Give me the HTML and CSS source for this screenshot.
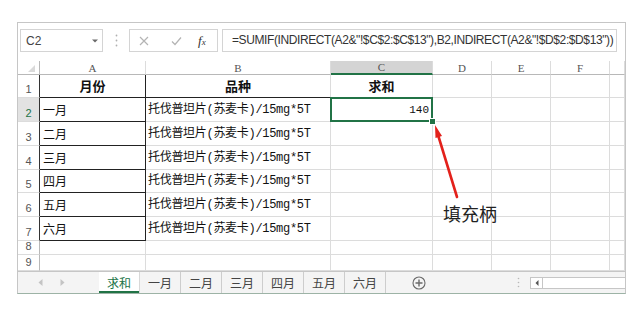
FILE: index.html
```html
<!DOCTYPE html>
<html lang="zh">
<head>
<meta charset="utf-8">
<link rel="stylesheet" href="styles.css">
</head>
<body>
<div class="window">
  <div class="fbar">
    <div class="namebox"><span>C2</span><svg width="6" height="4" viewBox="0 0 6 4"><path d="M0 0.5 L6 0.5 L3 3.5 Z" fill="#6a6a6a"/></svg></div>
    <div class="vdots"><svg width="3" height="13" viewBox="0 0 3 13"><circle cx="1.5" cy="1.5" r="0.9" fill="#b0b0b0"/><circle cx="1.5" cy="6.5" r="0.9" fill="#b0b0b0"/><circle cx="1.5" cy="11.5" r="0.9" fill="#b0b0b0"/></svg></div>
    <div class="btns">
      <svg class="ic-x" width="10" height="10" viewBox="0 0 10 10"><path d="M1 1 L9 9 M9 1 L1 9" stroke="#b4b4b4" stroke-width="1.2" fill="none"/></svg>
      <svg class="ic-ok" width="11" height="10" viewBox="0 0 11 10"><path d="M1 5.5 L4 8.5 L10 1.5" stroke="#b4b4b4" stroke-width="1.2" fill="none"/></svg>
      <span class="fx">f<span class="fx-x">x</span></span>
    </div>
    <div class="formula">=SUMIF(INDIRECT(A2&amp;"!$C$2:$C$13"),B2,INDIRECT(A2&amp;"!$D$2:$D$13"))</div>
  </div>

  <div class="sheet">
    <div class="c h corner"><span class="tri"></span></div>
    <div class="c h">A</div>
    <div class="c h">B</div>
    <div class="c h hsel">C</div>
    <div class="c h">D</div>
    <div class="c h">E</div>
    <div class="c h">F</div>
    <div class="c h"></div>

    <div class="c rh dk">1</div>
    <div class="c b bk-r bk-b">月份</div>
    <div class="c b bk-b">品种</div>
    <div class="c b">求和</div>
    <div class="c"></div><div class="c"></div><div class="c"></div><div class="c"></div>

    <div class="c rh dk rsel">2</div>
    <div class="c ta bk-r bk-b">一月</div>
    <div class="c tb">托伐普坦片(苏麦卡)/15mg*5T</div>
    <div class="c num sel">140</div>
    <div class="c"></div><div class="c"></div><div class="c"></div><div class="c"></div>

    <div class="c rh dk">3</div>
    <div class="c ta bk-r bk-b">二月</div>
    <div class="c tb">托伐普坦片(苏麦卡)/15mg*5T</div>
    <div class="c"></div>
    <div class="c"></div><div class="c"></div><div class="c"></div><div class="c"></div>

    <div class="c rh dk">4</div>
    <div class="c ta bk-r bk-b">三月</div>
    <div class="c tb">托伐普坦片(苏麦卡)/15mg*5T</div>
    <div class="c"></div>
    <div class="c"></div><div class="c"></div><div class="c"></div><div class="c"></div>

    <div class="c rh dk">5</div>
    <div class="c ta bk-r bk-b">四月</div>
    <div class="c tb">托伐普坦片(苏麦卡)/15mg*5T</div>
    <div class="c"></div>
    <div class="c"></div><div class="c"></div><div class="c"></div><div class="c"></div>

    <div class="c rh dk">6</div>
    <div class="c ta bk-r bk-b">五月</div>
    <div class="c tb">托伐普坦片(苏麦卡)/15mg*5T</div>
    <div class="c"></div>
    <div class="c"></div><div class="c"></div><div class="c"></div><div class="c"></div>

    <div class="c rh dk">7</div>
    <div class="c ta bk-r bk-b">六月</div>
    <div class="c tb">托伐普坦片(苏麦卡)/15mg*5T</div>
    <div class="c"></div>
    <div class="c"></div><div class="c"></div><div class="c"></div><div class="c"></div>

    <div class="c rh">8</div>
    <div class="c"></div><div class="c"></div><div class="c"></div>
    <div class="c"></div><div class="c"></div><div class="c"></div><div class="c"></div>

    <div class="c rh">9</div>
    <div class="c"></div><div class="c"></div><div class="c"></div>
    <div class="c"></div><div class="c"></div><div class="c"></div><div class="c"></div>
  </div>

  <div class="tabs">
    <div class="nav">
      <svg width="5" height="7" viewBox="0 0 5 7"><path d="M4.5 0 L0.5 3.5 L4.5 7 Z" fill="#c4c4c4"/></svg>
      <svg width="5" height="7" viewBox="0 0 5 7"><path d="M0.5 0 L4.5 3.5 L0.5 7 Z" fill="#c4c4c4"/></svg>
    </div>
    <div class="tab active">求和</div>
    <div class="tab">一月</div>
    <div class="tab">二月</div>
    <div class="tab">三月</div>
    <div class="tab">四月</div>
    <div class="tab">五月</div>
    <div class="tab">六月</div>
    <svg class="plus" width="14" height="14" viewBox="0 0 14 14"><circle cx="7" cy="7" r="6" stroke="#6a6a6a" stroke-width="1.1" fill="none"/><path d="M7 3.5 V10.5 M3.5 7 H10.5" stroke="#6a6a6a" stroke-width="1.4"/></svg>
    <div class="fill"></div>
    <div class="tdots"><svg width="3" height="11" viewBox="0 0 3 11"><circle cx="1.5" cy="1.5" r="0.8" fill="#b8b8b8"/><circle cx="1.5" cy="5.5" r="0.8" fill="#b8b8b8"/><circle cx="1.5" cy="9.5" r="0.8" fill="#b8b8b8"/></svg></div>
    <div class="scroll"><div class="sbtn"><svg width="4" height="6" viewBox="0 0 4 6"><path d="M3.5 0 L0.5 3 L3.5 6 Z" fill="#555"/></svg></div></div>
  </div>

  <svg class="arrow" width="40" height="80" viewBox="0 0 40 80">
    <path d="M10.5 15.5 L29 76" stroke="#e3211b" stroke-width="2.6" stroke-linecap="round" fill="none"/>
    <path d="M7 4 L14 15 L7.5 17 Z" fill="#e3211b"/>
  </svg>
  <div class="note">填充柄</div>
</div>
</body>
</html>
```

FILE: styles.css
```css
body {
  margin: 0;
  background: #fff;
  font-family: "Liberation Sans", "Noto Sans CJK SC", sans-serif;
}

.window {
  position: relative;
  margin: 22px 0 0 17px;
  width: 607px;
  height: 270px;
  border: 1px solid #c6c6c6;
  border-bottom-color: #9db3a6;
  display: flex;
  flex-direction: column;
  overflow: hidden;
}

/* formula bar */
.fbar {
  height: 38px;
  flex: none;
  display: flex;
  padding: 6px 8px 0 2px;
  box-sizing: border-box;
}
.namebox {
  width: 83px;
  height: 23px;
  border: 1px solid #d4d4d4;
  box-sizing: border-box;
  display: flex;
  align-items: center;
  justify-content: space-between;
  padding: 0 4px 0 5px;
  font-size: 12px;
  color: #444;
}
.vdots {
  width: 26px;
  height: 23px;
  display: flex;
  align-items: center;
  justify-content: center;
}
.btns {
  width: 89px;
  height: 23px;
  border: 1px solid #d4d4d4;
  box-sizing: border-box;
  display: flex;
  align-items: center;
  padding-left: 9px;
}
.ic-ok { margin-left: 22px; }
.fx {
  margin-left: 16px;
  font-family: "Liberation Serif", serif;
  font-style: italic;
  font-size: 13px;
  color: #333;
  line-height: 1;
}
.fx-x { font-size: 9px; }
.formula {
  flex: 1;
  margin-left: 4px;
  height: 23px;
  border: 1px solid #d4d4d4;
  box-sizing: border-box;
  padding-left: 9px;
  font-size: 12px;
  letter-spacing: -0.4px;
  line-height: 21px;
  color: #333;
  white-space: nowrap;
  overflow: hidden;
}

/* grid */
.sheet {
  flex: none;
  height: 210px;
  display: grid;
  grid-template-columns: 22px 106px 185px 102px 59px 59px 59px 15px;
  grid-template-rows: 14px 23px 24px 24px 24px 23px 24px 24px 14px 16px;
  overflow: hidden;
}
.c {
  border-right: 1px solid #dcdcdc;
  border-bottom: 1px solid #dcdcdc;
  box-sizing: border-box;
  display: flex;
  align-items: flex-end;
  padding: 0 2px 3px;
  white-space: nowrap;
  overflow: hidden;
  font-size: 12px;
  line-height: 16px;
  color: #111;
  font-family: "Liberation Mono", "Noto Sans CJK SC", monospace;
}
.h {
  justify-content: center;
  align-items: center;
  padding: 0;
  font-family: "Liberation Serif", serif;
  font-size: 11px;
  color: #555;
  border-bottom-color: #b8b8b8;
}
.corner {
  justify-content: flex-end;
  align-items: flex-end;
  padding: 0 4px 2px 0;
  border-right-color: #b8b8b8;
}
.tri {
  width: 0;
  height: 0;
  border-left: 7px solid transparent;
  border-bottom: 7px solid #dadada;
}
.hsel {
  background: #d4d4d4;
  border-bottom: 2px solid #217346;
}
.rh {
  justify-content: center;
  padding: 0 0 1px;
  font-family: "Liberation Sans", sans-serif;
  font-size: 11px;
  line-height: 13px;
  color: #555;
  border-right-color: #b8b8b8;
}
.rh.dk { border-right-color: #333; }
.rsel {
  background: #e2e2e2;
  color: #217346;
}
.b {
  justify-content: center;
  align-items: center;
  padding: 0;
  font-family: "Noto Sans CJK SC", sans-serif;
  font-weight: bold;
  font-size: 13px;
}
.bk-r { border-right-color: #222; }
.bk-b { border-bottom-color: #222; }
.ta {
  padding-left: 3px;
  font-family: "Noto Sans CJK SC", sans-serif;
}
.tb {
  padding-left: 2px;
  letter-spacing: -0.3px;
}
.num {
  justify-content: flex-end;
  padding-right: 3px;
  font-size: 11px;
}
.sel {
  position: relative;
  z-index: 2;
  overflow: visible;
}
.sel::before {
  content: "";
  position: absolute;
  left: -1px;
  top: -1px;
  right: -1px;
  bottom: -1px;
  border: 2px solid #217346;
}
.sel::after {
  content: "";
  position: absolute;
  right: -4px;
  bottom: -4px;
  width: 5px;
  height: 5px;
  background: #217346;
  border: 1px solid #fff;
}

/* sheet tabs */
.tabs {
  flex: none;
  height: 22px;
  display: flex;
  align-items: stretch;
  background: #f4f4f4;
  border-top: 1px solid #c6c6c6;
  box-sizing: border-box;
  font-family: "Noto Sans CJK SC", sans-serif;
  font-size: 12px;
  color: #444;
}
.nav {
  width: 81px;
  display: flex;
  align-items: center;
  padding-left: 20px;
  gap: 17px;
  box-sizing: border-box;
}
.tab {
  width: 41px;
  display: flex;
  align-items: center;
  justify-content: center;
  border-right: 1px solid #cdcdcd;
  box-sizing: border-box;
}
.tab.active {
  background: #fff;
  color: #217346;
  box-shadow: inset 0 -2px 0 #217346;
  border-right-color: #d8d8d8;
}
.plus {
  align-self: center;
  margin-left: 26px;
}
.fill { flex: 1; }
.tdots {
  width: 12px;
  display: flex;
  align-items: center;
  justify-content: center;
}
.scroll {
  align-self: center;
  margin-left: 6px;
  width: 95px;
  height: 12px;
  border: 1px solid #c6c6c6;
  border-right: none;
  box-sizing: border-box;
  background: #fff;
  display: flex;
}
.sbtn {
  width: 11px;
  border-right: 1px solid #c6c6c6;
  display: flex;
  align-items: center;
  justify-content: center;
}

/* annotation */
.arrow {
  position: absolute;
  left: 410px;
  top: 98px;
  z-index: 5;
}
.note {
  position: absolute;
  left: 425px;
  top: 178px;
  font-family: "Noto Sans CJK SC", sans-serif;
  font-size: 18px;
  line-height: 24px;
  color: #222;
  z-index: 5;
}
```
